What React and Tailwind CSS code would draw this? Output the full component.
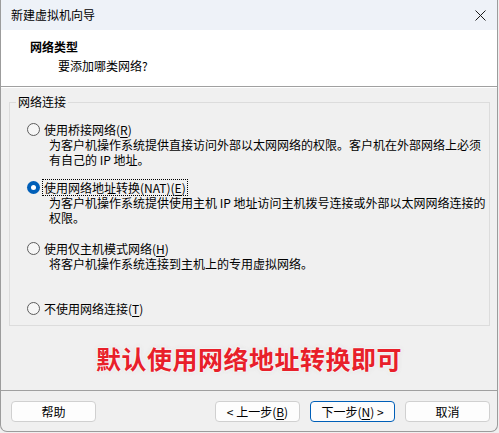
import React from 'react';

const Radio = ({ checked }) => (
  <span
    className={`box-border inline-block w-[13px] h-[13px] rounded-full shrink-0 ${
      checked ? 'bg-[#005fb8] border-0 relative' : 'border border-[#5c5c5c] bg-[#f6f6f6]'
    }`}
  >
    {checked && <span className="absolute left-[4px] top-[4px] w-[5px] h-[5px] rounded-full bg-white" />}
  </span>
);

const Option = ({ checked, label, hint, desc, focused, className = '' }) => (
  <div className={className}>
    <div className="flex items-center h-4 pl-[17px]">
      <Radio checked={checked} />
      <span className={`ml-[3px] px-px leading-[15px] ${focused ? 'outline-1 outline-dotted outline-black' : ''}`}>
        {label}(<span className="underline underline-offset-2">{hint}</span>)
      </span>
    </div>
    {desc && (
      <div className="pl-[39px] leading-[15px] whitespace-nowrap">
        {desc.map((line, i) => (
          <div key={i}>{line}</div>
        ))}
      </div>
    )}
  </div>
);

const Button = ({ children, primary, className = '' }) => (
  <button
    className={`h-[21px] w-[85px] rounded-[4px] bg-[#fdfdfd] text-[12px] leading-none flex items-center justify-center ${
      primary ? 'border border-[#005fb8]' : 'border border-[#d0d0d0]'
    } ${className}`}
  >
    {children}
  </button>
);

export default function App() {
  return (
    <div
      className="w-[499px] h-[433px] bg-[#f0f0f0] text-[12px] text-black overflow-hidden"
      style={{ fontFamily: '"Noto Sans CJK SC", "Noto Sans", sans-serif' }}
    >
      <div className="w-[498px] h-[432px] border-x border-b border-[#9c9c9c] rounded-b-[7px] flex flex-col overflow-hidden">
        {/* title bar */}
        <div className="h-[30px] bg-[#eef2f8] flex items-center justify-between pl-[10px] pr-[10px] shrink-0">
          <span className="leading-none">新建虚拟机向导</span>
          <svg width="11" height="11" viewBox="0 0 11 11" className="mr-[1px]">
            <path d="M0.5 0.5 L10.5 10.5 M10.5 0.5 L0.5 10.5" stroke="#1a1a1a" strokeWidth="1" />
          </svg>
        </div>

        {/* header */}
        <div className="h-[57px] bg-white border-b border-[#a0a0a0] shrink-0 pt-[9px]">
          <div className="pl-[29px] font-bold leading-[16px]">网络类型</div>
          <div className="pl-[57px] leading-[16px] mt-[3px]">要添加哪类网络?</div>
        </div>

        {/* body */}
        <div className="flex-1 border-t border-white flex flex-col">
          <fieldset className="mt-[6px] ml-[8px] w-[481px] border border-[#dcdcdc] px-0 pt-[11px] pb-[9px] min-w-0">
            <legend className="ml-[6px] px-[2px] leading-4">网络连接</legend>
            <Option
              label="使用桥接网络"
              hint="R"
              desc={['为客户机操作系统提供直接访问外部以太网网络的权限。客户机在外部网络上必须', '有自己的 IP 地址。']}
            />
            <Option
              className="mt-[12px]"
              checked
              focused
              label="使用网络地址转换(NAT)"
              hint="E"
              desc={['为客户机操作系统提供使用主机 IP 地址访问主机拨号连接或外部以太网网络连接的', '权限。']}
            />
            <Option
              className="mt-[15px]"
              label="使用仅主机模式网络"
              hint="H"
              desc={['将客户机操作系统连接到主机上的专用虚拟网络。']}
            />
            <Option className="mt-[29px]" label="不使用网络连接" hint="T" />
          </fieldset>

          <div className="flex-1 flex items-center justify-center">
            <span className="text-[25px] font-bold text-[#e8202a] leading-none tracking-[0.5px] [text-shadow:0_0_2px_#fff,0_0_3px_#fff,0_0_5px_#d8d8d8]">
              默认使用网络地址转换即可
            </span>
          </div>
        </div>

        {/* footer */}
        <div className="h-[41px] border-t border-[#a0a0a0] shrink-0 flex items-start pt-[10px] pl-[10px]">
          <Button>帮助</Button>
          <Button className="ml-[119px]">
            &lt; 上一步(<span className="underline underline-offset-2">B</span>)
          </Button>
          <Button primary className="ml-[10px]">
            下一步(<span className="underline underline-offset-2">N</span>) &gt;
          </Button>
          <Button className="ml-[10px]">取消</Button>
        </div>
      </div>
    </div>
  );
}
